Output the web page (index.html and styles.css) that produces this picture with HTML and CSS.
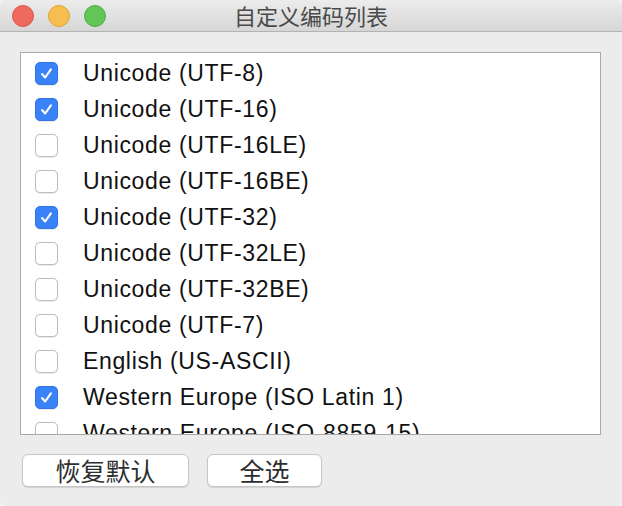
FILE: index.html
```html
<!DOCTYPE html>
<html lang="zh">
<head>
<meta charset="utf-8">
<title>自定义编码列表</title>
<link rel="stylesheet" href="styles.css">
</head>
<body>
<div class="window">
  <div class="titlebar">
    <div class="lights">
      <span class="light red"></span>
      <span class="light yellow"></span>
      <span class="light green"></span>
    </div>
    <div class="title">自定义编码列表</div>
    <div class="spacer"></div>
  </div>
  <div class="content">
    <div class="list">
      <div class="row"><span class="cb checked"><svg viewBox="0 0 22 22"><path d="M6.3 11.6 L9.6 15.2 L15.6 6.6"/></svg></span><span class="label">Unicode (UTF-8)</span></div>
      <div class="row"><span class="cb checked"><svg viewBox="0 0 22 22"><path d="M6.3 11.6 L9.6 15.2 L15.6 6.6"/></svg></span><span class="label">Unicode (UTF-16)</span></div>
      <div class="row"><span class="cb"></span><span class="label">Unicode (UTF-16LE)</span></div>
      <div class="row"><span class="cb"></span><span class="label">Unicode (UTF-16BE)</span></div>
      <div class="row"><span class="cb checked"><svg viewBox="0 0 22 22"><path d="M6.3 11.6 L9.6 15.2 L15.6 6.6"/></svg></span><span class="label">Unicode (UTF-32)</span></div>
      <div class="row"><span class="cb"></span><span class="label">Unicode (UTF-32LE)</span></div>
      <div class="row"><span class="cb"></span><span class="label">Unicode (UTF-32BE)</span></div>
      <div class="row"><span class="cb"></span><span class="label">Unicode (UTF-7)</span></div>
      <div class="row"><span class="cb"></span><span class="label">English (US-ASCII)</span></div>
      <div class="row"><span class="cb checked"><svg viewBox="0 0 22 22"><path d="M6.3 11.6 L9.6 15.2 L15.6 6.6"/></svg></span><span class="label">Western Europe (ISO Latin 1)</span></div>
      <div class="row"><span class="cb"></span><span class="label">Western Europe (ISO-8859-15)</span></div>
    </div>
    <div class="buttons">
      <button class="btn wide">恢复默认</button>
      <button class="btn narrow">全选</button>
    </div>
  </div>
</div>
</body>
</html>
```
FILE: styles.css
```css
* { box-sizing: border-box; }
html, body { margin: 0; padding: 0; background: #f4f4f4; }
body { width: 622px; height: 506px; overflow: hidden; }

.window {
  width: 622px;
  height: 506px;
  background: #ececec;
  border-radius: 6px;
  overflow: hidden;
  font-family: "Liberation Sans", "Noto Sans CJK SC", sans-serif;
}

.titlebar {
  height: 32px;
  display: grid;
  grid-template-columns: 1fr auto 1fr;
  align-items: center;
  background: linear-gradient(#ececec, #d6d6d6);
  border-bottom: 1px solid #b3b3b3;
}
.lights {
  display: flex;
  gap: 14px;
  padding-left: 12px;
  align-items: center;
}
.light {
  width: 22px;
  height: 22px;
  border-radius: 50%;
  display: block;
}
.red { background: #ee6a5f; border: 1px solid #d9564b; }
.yellow { background: #f6be4f; border: 1px solid #dfa33a; }
.green { background: #62c655; border: 1px solid #4fae43; }
.title {
  font-family: "Noto Sans CJK SC", sans-serif;
  font-size: 22px;
  color: #4a4a4a;
  line-height: 31px;
}

.content {
  padding: 20px 21px 0 20px;
}
.list {
  height: 383px;
  background: #fff;
  border: 1px solid #a8a8a8;
  overflow: hidden;
  padding: 2px 0 0 14px;
}
.row {
  height: 36px;
  display: flex;
  align-items: center;
}
.cb {
  width: 23px;
  height: 23px;
  flex: none;
  border-radius: 5px;
  border: 1px solid #bdbdbd;
  background: #fff;
  box-shadow: 0 0.5px 1px rgba(0,0,0,0.08);
  margin-right: 25px;
  display: flex;
  align-items: center;
  justify-content: center;
}
.cb.checked {
  background: #3a82f7;
  border-color: #3273e6;
}
.cb svg {
  width: 21px;
  height: 21px;
}
.cb svg path {
  fill: none;
  stroke: #fff;
  stroke-width: 2.2;
  stroke-linecap: round;
  stroke-linejoin: round;
}
.label {
  font-size: 23px;
  letter-spacing: 0.65px;
  color: #111;
  white-space: nowrap;
}

.buttons {
  display: flex;
  gap: 18px;
  margin-top: 19px;
  padding-left: 2px;
}
.btn {
  height: 33px;
  padding: 0;
  display: flex;
  align-items: center;
  justify-content: center;
  background: #fff;
  border: 1px solid #c6c6c6;
  border-radius: 6px;
  box-shadow: 0 1px 1px rgba(0,0,0,0.12);
  font-family: "Noto Sans CJK SC", sans-serif;
  font-size: 25px;
  line-height: 29px;
  color: #2e2e2e;
}
.wide { width: 167px; }
.narrow { width: 115px; }
```
